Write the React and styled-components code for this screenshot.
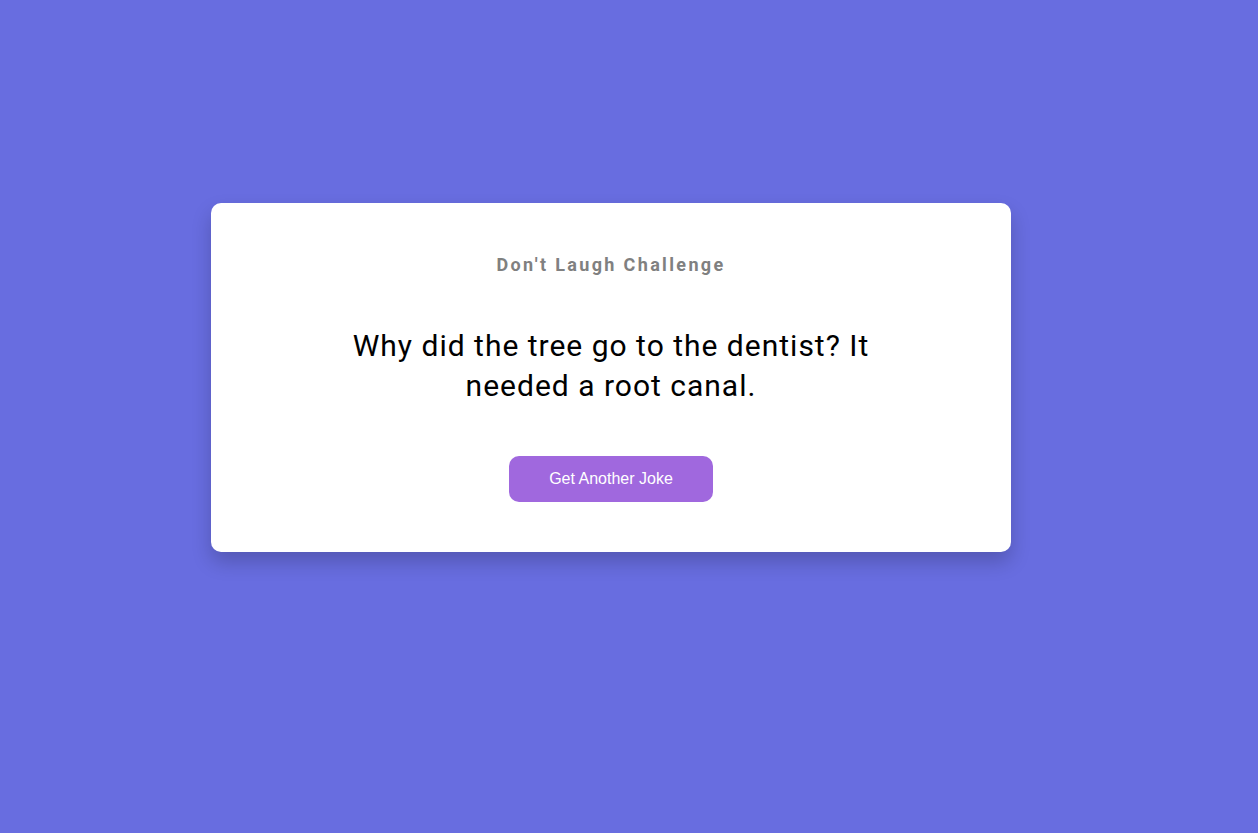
import React, { useState } from 'react';
import styled, { createGlobalStyle } from 'styled-components';

const GlobalStyle = createGlobalStyle`
  body {
    margin: 0;
    background-color: #686de0;
    font-family: Roboto, "Liberation Sans", sans-serif;
  }
`;

const jokes = [
  'Why did the tree go to the dentist? It needed a root canal.',
  'Why don\'t skeletons fight each other? They don\'t have the guts.',
  'What do you call fake spaghetti? An impasta.',
];

function App() {
  const [index, setIndex] = useState(0);

  return (
    <Page>
      <GlobalStyle />
      <Card>
        <Title>Don't Laugh Challenge</Title>
        <Joke>{jokes[index]}</Joke>
        <Button onClick={() => setIndex((index + 1) % jokes.length)}>
          Get Another Joke
        </Button>
      </Card>
    </Page>
  );
}

const Page = styled.div`
  display: flex;
  justify-content: center;
  min-height: 100vh;
  padding: 203px 36px 0 0;
  box-sizing: border-box;
`;

const Card = styled.div`
  display: flex;
  flex-direction: column;
  align-items: center;
  width: 800px;
  height: 349px;
  box-sizing: border-box;
  padding: 50px;
  background-color: #fff;
  border-radius: 10px;
  box-shadow: 0 10px 20px rgba(0, 0, 0, 0.2);
  text-align: center;
`;

const Title = styled.h3`
  margin: 0;
  font-size: 18px;
  font-weight: 700;
  line-height: 24px;
  letter-spacing: 2.35px;
  color: #808080;
`;

const Joke = styled.div`
  max-width: 560px;
  margin: 49px 0 0;
  font-size: 30px;
  line-height: 40px;
  letter-spacing: 1px;
  color: #000;
`;

const Button = styled.button`
  width: 204px;
  height: 46px;
  margin-top: auto;
  border: none;
  border-radius: 10px;
  background-color: #a068de;
  color: #fff;
  font-family: "Liberation Sans", Arial, sans-serif;
  font-size: 16px;
  cursor: pointer;
`;

export default App;
